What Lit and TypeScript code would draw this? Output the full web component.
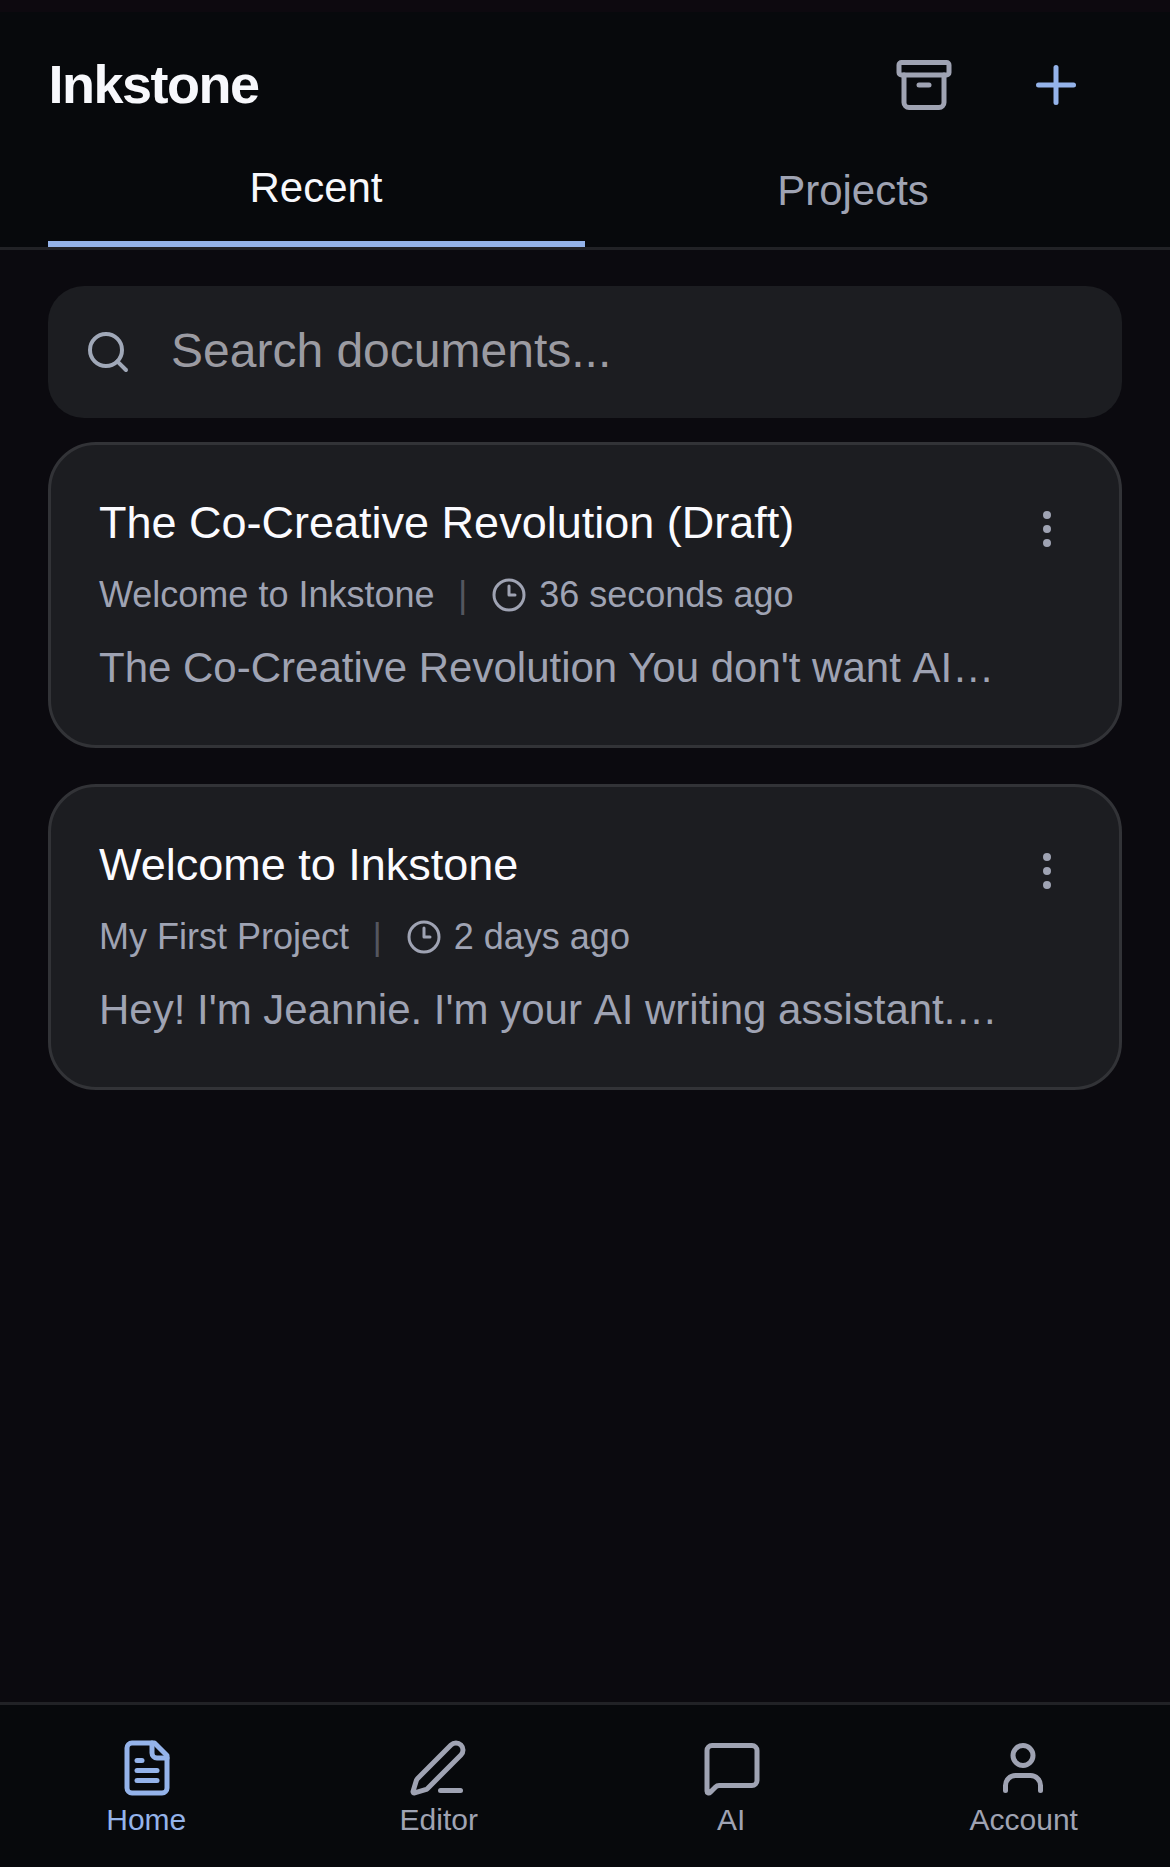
import { LitElement, html, css, svg, type TemplateResult } from "lit";
import { customElement, property, state } from "lit/decorators.js";
import { classMap } from "lit/directives/class-map.js";

const ICONS = {
  archive: svg`<rect width="20" height="5" x="2" y="3" rx="1"/><path d="M4 8v11a2 2 0 0 0 2 2h12a2 2 0 0 0 2-2V8"/><path d="M10 12h4"/>`,
  plus: svg`<path d="M5 12h14"/><path d="M12 5v14"/>`,
  search: svg`<circle cx="11" cy="11" r="8"/><path d="m21 21-4.34-4.34"/>`,
  clock: svg`<circle cx="12" cy="12" r="10"/><path d="M12 6v6h4"/>`,
  more: svg`<circle cx="12" cy="12" r="1"/><circle cx="12" cy="5" r="1"/><circle cx="12" cy="19" r="1"/>`,
  file: svg`<path d="M15 2H6a2 2 0 0 0-2 2v16a2 2 0 0 0 2 2h12a2 2 0 0 0 2-2V7Z"/><path d="M14 2v4a2 2 0 0 0 2 2h4"/><path d="M10 9H8"/><path d="M16 13H8"/><path d="M16 17H8"/>`,
  pen: svg`<path d="M13 21h8"/><path d="M21.174 6.812a1 1 0 0 0-3.986-3.987L3.842 16.174a2 2 0 0 0-.5.83l-1.321 4.352a.5.5 0 0 0 .623.622l4.353-1.32a2 2 0 0 0 .83-.497z"/>`,
  chat: svg`<path d="M22 17a2 2 0 0 1-2 2H6.828a2 2 0 0 0-1.414.586l-2.202 2.202A.71.71 0 0 1 2 21.286V5a2 2 0 0 1 2-2h16a2 2 0 0 1 2 2z"/>`,
  user: svg`<path d="M19 21v-2a4 4 0 0 0-4-4H9a4 4 0 0 0-4 4v2"/><circle cx="12" cy="7" r="4"/>`,
};
type IconName = keyof typeof ICONS;

interface Doc {
  title: string;
  project: string;
  time: string;
  excerpt: TemplateResult;
}

@customElement("ink-icon")
export class InkIcon extends LitElement {
  @property() name: IconName = "plus";

  static styles = css`
    :host { display: block; flex: none; width: 60px; height: 60px; }
    .glyph {
      display: block; width: 100%; height: 100%;
      fill: none; stroke: currentColor; stroke-width: 2;
      stroke-linecap: round; stroke-linejoin: round;
    }
  `;

  render() {
    return html`<svg class="glyph" viewBox="0 0 24 24">${ICONS[this.name]}</svg>`;
  }
}

@customElement("doc-card")
export class DocCard extends LitElement {
  @property({ attribute: false }) doc!: Doc;

  static styles = css`
    :host { display: block; }
    .card {
      box-sizing: border-box; height: 306px; padding: 48px;
      display: flex; justify-content: space-between;
      background: #1c1d21; border: 3px solid #323337; border-radius: 48px;
    }
    .body { display: flex; flex-direction: column; min-width: 0; white-space: nowrap; }
    .title { margin: 0; font-size: 45px; font-weight: 400; line-height: 60px; color: #fbfbff; }
    .meta {
      display: flex; align-items: center; margin-top: 18px;
      font-size: 36px; line-height: 48px; color: #9fa3b3;
    }
    .sep { margin: 0 24px 0 23.4px; color: #54565f; }
    .clock { width: 36px; height: 36px; margin-right: 12px; }
    .excerpt { margin: 17px 0 0; font-size: 42px; line-height: 63px; color: #9fa3b3; }
    /* Cancels the tight space-to-A kerning pair. */
    .unkern { padding-left: 0.1px; }
    .menu { height: 72px; display: flex; align-items: center; color: #9fa3b3; background: none; border: 0; padding: 0; }
    .dots { width: 48px; height: 48px; }
  `;

  render() {
    const d = this.doc;
    return html`
      <article class="card">
        <div class="body">
          <h2 class="title">${d.title}</h2>
          <div class="meta">
            <span>${d.project}</span><span class="sep">|</span>
            <ink-icon class="clock" name="clock"></ink-icon><span>${d.time}</span>
          </div>
          <p class="excerpt">${d.excerpt}</p>
        </div>
        <button class="menu"><ink-icon class="dots" name="more"></ink-icon></button>
      </article>
    `;
  }
}

@customElement("app-root")
export class AppRoot extends LitElement {
  @state() private tab = "Recent";
  @state() private section = "Home";

  private docs: Doc[] = [
    {
      title: "The Co-Creative Revolution (Draft)",
      project: "Welcome to Inkstone",
      time: "36 seconds ago",
      excerpt: html`The Co-Creative Revolution You don't want <span class="unkern">AI…</span>`,
    },
    {
      title: "Welcome to Inkstone",
      project: "My First Project",
      time: "2 days ago",
      excerpt: html`Hey! I'm Jeannie. I'm your <span class="unkern">AI writing assistant.…</span>`,
    },
  ];

  private sections: { label: string; icon: IconName }[] = [
    { label: "Home", icon: "file" },
    { label: "Editor", icon: "pen" },
    { label: "AI", icon: "chat" },
    { label: "Account", icon: "user" },
  ];

  static styles = css`
    :host {
      display: flex; flex-direction: column; box-sizing: border-box;
      width: 100%; height: 100vh; overflow: hidden;
      background: #0b0a0f; color: #9fa3b3;
      font-family: "Liberation Sans", Arial, sans-serif;
    }
    button { font: inherit; color: inherit; background: none; border: 0; padding: 0; margin: 0; }
    .status { flex: none; height: 12px; background: #0d090f; }
    .header {
      flex: none; box-sizing: border-box; height: 238px; padding: 25px 48px 0;
      background: #07090c; border-bottom: 3px solid #212226;
    }
    .bar { display: flex; align-items: center; justify-content: space-between; height: 96px; }
    .brand { margin: 0; padding: 0 0 2px 0.5px; font-size: 54px; font-weight: 700; letter-spacing: -1.5px; line-height: 72px; color: #f7f8fc; }
    .actions { display: flex; }
    .action { width: 132px; height: 96px; display: flex; align-items: center; justify-content: center; }
    .accent { color: #94b3ea; }
    .tabs { display: grid; grid-template-columns: 1fr 1fr; height: 114px; }
    .tab { box-sizing: border-box; height: 114px; padding: 2px 1px 0 0; font-size: 42px; }
    .tab.active { color: #f7f8fc; border-bottom: 6px solid #94b3e9; }
    .main { flex: 1; min-height: 0; padding: 36px 48px 0; }
    .search {
      box-sizing: border-box; height: 132px; padding: 0 36px; margin-bottom: 24px;
      display: flex; align-items: center; gap: 39px;
      background: #1c1d21; border-radius: 36px;
    }
    .lens { width: 48px; height: 48px; color: #a0a8b8; }
    .placeholder { padding-bottom: 2px; font-size: 48px; line-height: 72px; color: #9b9ba2; }
    .list { display: flex; flex-direction: column; gap: 36px; }
    .nav {
      flex: none; box-sizing: border-box; height: 165px; padding-top: 33px;
      display: grid; grid-template-columns: repeat(4, 1fr);
      background: #07090c; border-top: 3px solid #212226;
    }
    .item { display: flex; flex-direction: column; align-items: center; gap: 4px; font-size: 30px; line-height: 36px; }
    .item:nth-child(odd) ink-icon { margin-left: 1.5px; }
    .item:nth-child(even) ink-icon { margin-right: 1.5px; }
  `;

  render() {
    return html`
      <div class="status"></div>
      <header class="header">
        <div class="bar">
          <h1 class="brand">Inkstone</h1>
          <div class="actions">
            <button class="action"><ink-icon name="archive"></ink-icon></button>
            <button class="action accent"><ink-icon name="plus"></ink-icon></button>
          </div>
        </div>
        <div class="tabs">
          ${["Recent", "Projects"].map(
            (t) => html`<button
              class=${classMap({ tab: true, active: t === this.tab })}
              @click=${() => (this.tab = t)}
            >${t}</button>`
          )}
        </div>
      </header>
      <main class="main">
        <div class="search">
          <ink-icon class="lens" name="search"></ink-icon>
          <span class="placeholder">Search documents...</span>
        </div>
        <div class="list">
          ${this.docs.map((d) => html`<doc-card .doc=${d}></doc-card>`)}
        </div>
      </main>
      <nav class="nav">
        ${this.sections.map(
          (s) => html`<button
            class=${classMap({ item: true, accent: s.label === this.section })}
            @click=${() => (this.section = s.label)}
          ><ink-icon name=${s.icon}></ink-icon><span>${s.label}</span></button>`
        )}
      </nav>
    `;
  }
}
